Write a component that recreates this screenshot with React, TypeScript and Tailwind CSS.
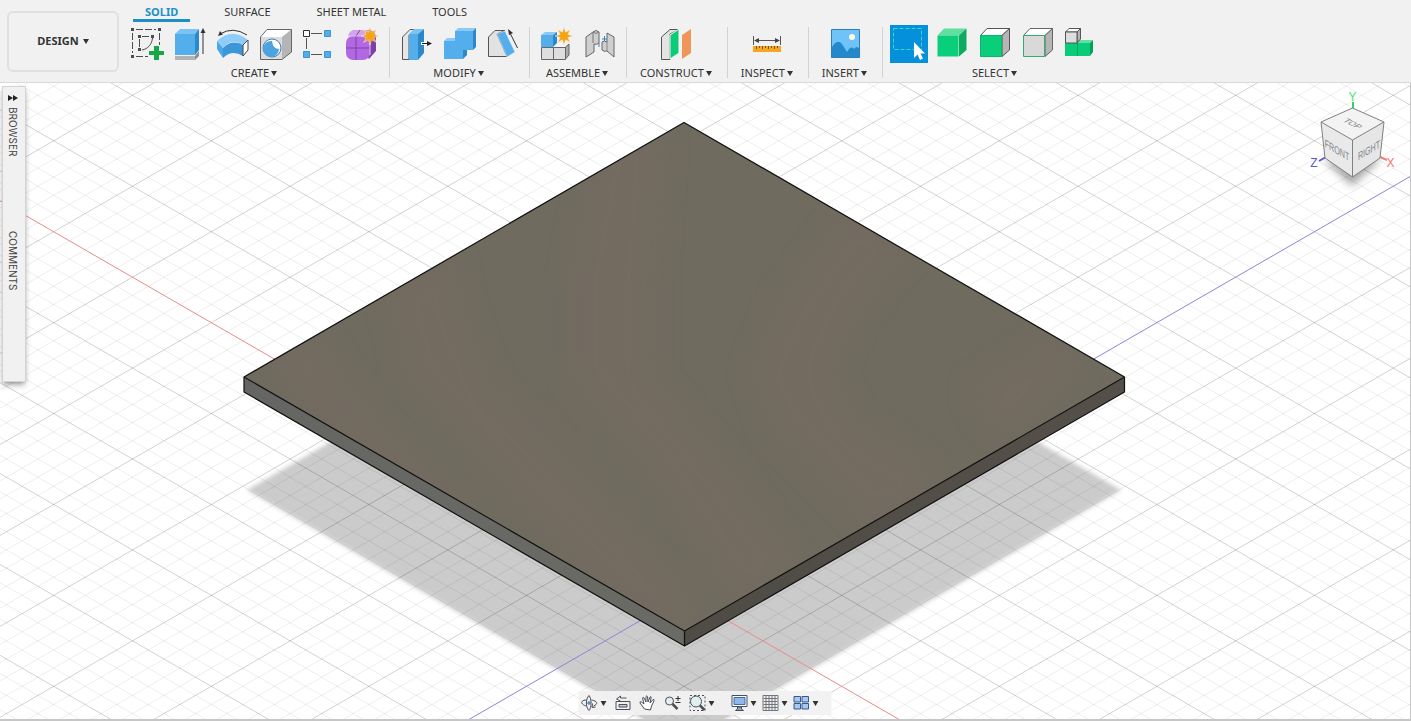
import type { ReactNode } from "react";

type Tool = { name: string; icon: ReactNode; active?: boolean };
type Group = { label: string; tools: Tool[] };

const INK = "#4d4d4d";

const Caret = () => (
  <svg viewBox="0 0 6 5" className="w-[6px] h-[5px] shrink-0" fill="#333">
    <path d="M0 0H6L3 5Z" />
  </svg>
);

const Icon = ({ children }: { children: ReactNode }) => (
  <svg viewBox="0 0 38 38" className="w-[38px] h-[38px]" fill="none" strokeLinejoin="round">
    {children}
  </svg>
);

const Star = () => (
  <path
    d="M27 2L28.600 7.200L33.400 4.600L30.800 9.400L36 11L30.800 12.600L33.400 17.400L28.600 14.800L27 20L25.400 14.800L20.600 17.400L23.200 12.600L18 11L23.200 9.400L20.600 4.600L25.400 7.200Z"
    fill="#f5a30e"
    stroke="#f0f0f0"
    strokeWidth="0.5"
  />
);

const SketchIcon = () => (
  <Icon>
    <path d="M8 4.500H28M31.500 8V20M4.500 8V28M8 31.500H20" stroke={INK} strokeDasharray="7 2" />
    <path d="M14 11.500H21M11.500 14V22M24.500 13C24 19 20 24 14 25" stroke={INK} />
    <path d="M3 3h3v3h-3zM30 3h3v3h-3zM3 30h3v3h-3zM10 10h3v3h-3zM23 10h3v3h-3zM10 23h3v3h-3z" fill={INK} />
    <path d="M26 21h5v5h5v4h-5v5h-5v-5h-5v-4h5z" fill="#17a745" />
  </Icon>
);

const ExtrudeIcon = () => (
  <Icon>
    <path d="M4 31H24V35H4Z" fill="#b3b3b3" />
    <path d="M24 31L28 26V31L24 35Z" fill="#8c8c8c" />
    <path d="M4 9L9 4H28L24 9Z" fill="#7cc3f5" />
    <path d="M4 9H24V30H4Z" fill="#55aeec" />
    <path d="M24 9L28 4V25L24 30Z" fill="#2b88cb" />
    <path d="M32 6V29" stroke="#333" />
    <path d="M32 3L34.500 8H29.500Z" fill="#333" />
  </Icon>
);

const RevolveIcon = () => (
  <Icon>
    <path d="M6 9Q19 1 33 10" stroke="#333" />
    <path d="M4 11L6 6L9 9.500Z" fill="#333" />
    <path d="M3 16Q18 2 34 15L29 20Q18 12 9 23Z" fill="#8fcdf8" />
    <path d="M3 16L9 23V33L3 24Z" fill="#4aa6e6" />
    <path d="M9 23Q18 14 29 20V31Q18 24 9 33Z" fill="#3c97d8" />
    <path d="M29 20L34 15V25L29 31Z" fill="#fff" stroke="#444" />
  </Icon>
);

const HoleIcon = () => (
  <Icon>
    <path d="M3 12L10 4H35L25 12Z" fill="#fff" />
    <path d="M3 12H25V34H3Z" fill="#dcdcdc" />
    <path d="M25 12L35 4V27L25 34Z" fill="#b5b5b5" />
    <path d="M3.500 12L10 4.500H34.500V27L25 34.500H3.500Z" stroke="#666" />
    <circle cx="15" cy="23" r="9" fill="#fff" stroke="#3a7fb3" />
    <path d="M15 16A8 8 0 1 0 22 24Q16 24 15 16Z" fill="#4ba3e0" />
  </Icon>
);

const PatternIcon = () => (
  <Icon>
    <path d="M11 8.500H22M6.500 13V24M11 29.500H22" stroke="#555" />
    <path d="M3.500 5.500h6v6h-6z" fill="#fff" stroke="#333" />
    <path d="M24.500 5.500h6v6h-6zM24.500 26.500h6v6h-6zM3.500 26.500h6v6h-6z" fill="#55aeec" stroke="#3b93d0" />
  </Icon>
);

const FormIcon = () => (
  <Icon>
    <path d="M10 5H27Q33 7 33 13V26L26 34L9 10Z" fill="#7e3fa8" />
    <path d="M11 5H24Q28 6 27 11H5Q6 6 11 5Z" fill="#d3a3ef" />
    <rect x="3" y="11" width="24" height="24" rx="7" fill="#b368e3" />
    <path d="M13 11V35M3 23H27M13 11L17 5M27 23L33 17" stroke="#7d42a6" />
    <path d="M5 11H25M27 15V30" stroke="#e0bdf3" />
    <Star />
  </Icon>
);

const PressPullIcon = () => (
  <Icon>
    <path d="M5.500 12L13 4.500H20L12 10V34.500H5.500Z" fill="#e6e6e6" stroke="#555" />
    <path d="M12 9L17 4H27L21 9Z" fill="#7cc3f5" />
    <path d="M12 9H21V35H12Z" fill="#55aeec" />
    <path d="M21 9L27 4V28L21 35Z" fill="#2b88cb" />
    <path d="M24 18.500H31" stroke="#fff" strokeWidth="3" />
    <path d="M25 18.500H31" stroke="#222" />
    <path d="M35 18.500L30 16V21Z" fill="#222" />
  </Icon>
);

const CombineIcon = () => (
  <Icon>
    <path d="M4 16L7 13H15V6L18 3H36L33 6H15V16Z" fill="#8acaf7" />
    <path d="M4 16H15V6H33V25H23V34H4Z" fill="#55aeec" />
    <path d="M33 6L36 3V22L33 25ZM23 25H27V30L23 34Z" fill="#2b88cb" />
  </Icon>
);

const ChamferIcon = () => (
  <Icon>
    <path d="M5.500 12L12 5.500H22L14 9L24 31.500H5.500Z" fill="#e2e2e2" stroke="#555" />
    <path d="M14 9L22 6L32 27L24 32Z" fill="#55aeec" stroke="#f5f5f5" strokeWidth="0.500" />
    <path d="M34.500 23L27 8" stroke="#333" />
    <path d="M25 4L30 8L26 10Z" fill="#333" />
  </Icon>
);

const ComponentIcon = () => (
  <Icon>
    <path d="M16 22L20 18H32L28 22Z" fill="#f5f5f5" />
    <path d="M4.500 22.500H16.500V34.500H4.500ZM16.500 22.500H28.500V34.500H16.500Z" fill="#dedede" stroke="#666" />
    <path d="M28.500 22L32 19V30L28.500 34Z" fill="#aaa" stroke="#666" />
    <path d="M4 10L8 7H20L16 10Z" fill="#8acaf7" />
    <path d="M4 10H16V22H4Z" fill="#55aeec" />
    <path d="M16 10L20 7V18L16 22Z" fill="#2b88cb" />
    <Star />
  </Icon>
);

const JointIcon = () => (
  <Icon>
    <path d="M6 12L13 7Q16 4 19 7V18Q17 20 14 19V27L6 32Z" fill="#cfcfcf" stroke="#666" />
    <path d="M13 7Q16 10 19 7M13 8V18" stroke="#777" />
    <path d="M34 12L27 8V17Q24 15 22 17V25Q24 27 27 26L34 32Z" fill="#cfcfcf" stroke="#666" />
    <path d="M27 17V26" stroke="#888" />
    <path d="M19 22V18M24.500 11V16M22 14H27" stroke="#2b88cb" />
  </Icon>
);

const PlaneIcon = () => (
  <Icon>
    <path d="M4.500 12L13 4.500H22L13 9V34.500H4.500Z" fill="#e4e4e4" stroke="#555" />
    <path d="M13 10L22 4V28L13 34Z" fill="#0acb78" stroke="#f5f5f5" />
    <path d="M25 10L34 4V28L25 34Z" fill="#f0955a" />
  </Icon>
);

const MeasureIcon = () => (
  <Icon>
    <path d="M5.500 11V20M32.500 11V20M8 15.500H30" stroke="#555" />
    <path d="M6 15.500L11 13V18ZM32 15.500L27 13V18Z" fill="#444" />
    <path d="M5 21H33V27H5Z" fill="#f5a623" />
    <path d="M8.500 21V24M11.500 21V23M14.500 21V24M17.500 21V23M20.500 21V24M23.500 21V23M26.500 21V24M29.500 21V23" stroke="#7a5210" />
  </Icon>
);

const ImageIcon = () => (
  <Icon>
    <path d="M5.500 4.500H33.500V32.500H5.500Z" fill="#6fc3f9" />
    <path d="M5.500 23Q11 13 16 19L21 27Q25 20 28 24Q31 20 33.500 24V32.500H5.500Z" fill="#2489ca" />
    <circle cx="26" cy="12" r="3" fill="#fffbe0" />
    <path d="M5.500 4.500H33.500V32.500H5.500Z" stroke="#2b80b8" />
  </Icon>
);

const WindowSelectIcon = () => (
  <Icon>
    <path d="M3.500 3.500H31.500V24.500H3.500Z" stroke="#3cd6c4" strokeDasharray="4 2" />
    <path d="M24 17V33L27.500 29.500L30 35L33 33.500L30.500 28.500H35Z" fill="#fff" />
  </Icon>
);

type BoxProps = { front: string; top: string; side: string; edge?: string; frontEdge?: string };
const BoxIcon = ({ front, top, side, edge, frontEdge }: BoxProps) => (
  <Icon>
    <path d="M4.500 10.500L11 3.500H33.500L26 10.500Z" fill={top} stroke={edge} />
    <path d="M26 10.500L33.500 3.500V25L26 31.500Z" fill={side} stroke={edge} />
    <path d="M4.500 10.500H25.500V31.500H4.500Z" fill={front} stroke={frontEdge} />
  </Icon>
);

const BodySelectIcon = () => (
  <Icon>
    <path d="M3 18L6 15H31L28 18Z" fill="#5fe09f" />
    <path d="M3 18H28V31H3Z" fill="#0acb78" />
    <path d="M28 18L31 15V27L28 31Z" fill="#00a35a" />
    <path d="M15.500 18V31" stroke="#00a35a" />
    <path d="M3.500 7L7 3.500H18.500L15 7Z" fill="#fff" stroke="#555" />
    <path d="M15 7L18.500 3.500V14L15 18Z" fill="#b5b5b5" stroke="#555" />
    <path d="M3.500 7H15V18H3.500Z" fill="#dedede" stroke="#555" />
  </Icon>
);

const tabs = ["SOLID", "SURFACE", "SHEET METAL", "TOOLS"];

const groups: Group[] = [
  {
    label: "CREATE",
    tools: [
      { name: "Create sketch", icon: <SketchIcon /> },
      { name: "Extrude", icon: <ExtrudeIcon /> },
      { name: "Revolve", icon: <RevolveIcon /> },
      { name: "Hole", icon: <HoleIcon /> },
      { name: "Pattern", icon: <PatternIcon /> },
      { name: "Create form", icon: <FormIcon /> },
    ],
  },
  {
    label: "MODIFY",
    tools: [
      { name: "Press pull", icon: <PressPullIcon /> },
      { name: "Combine", icon: <CombineIcon /> },
      { name: "Chamfer", icon: <ChamferIcon /> },
    ],
  },
  {
    label: "ASSEMBLE",
    tools: [
      { name: "New component", icon: <ComponentIcon /> },
      { name: "Joint", icon: <JointIcon /> },
    ],
  },
  { label: "CONSTRUCT", tools: [{ name: "Offset plane", icon: <PlaneIcon /> }] },
  { label: "INSPECT", tools: [{ name: "Measure", icon: <MeasureIcon /> }] },
  { label: "INSERT", tools: [{ name: "Canvas", icon: <ImageIcon /> }] },
  {
    label: "SELECT",
    tools: [
      { name: "Window selection", icon: <WindowSelectIcon />, active: true },
      { name: "Select body", icon: <BoxIcon front="#0acf7a" top="#5fe09f" side="#0cab5f" /> },
      { name: "Select face", icon: <BoxIcon front="#0acf7a" top="#fff" side="#b5b5b5" edge="#555" frontEdge="#0bb56b" /> },
      { name: "Select edge", icon: <BoxIcon front="#d9d9d9" top="#fff" side="#b5b5b5" edge="#666" frontEdge="#2fae74" /> },
      { name: "Select component", icon: <BodySelectIcon /> },
    ],
  },
];

const ToolGroup = ({ group, last }: { group: Group; last: boolean }) => (
  <>
    <div className="flex flex-col items-center pl-[7px] pr-2">
      <div className="flex gap-[5px]">
        {group.tools.map((tool) => (
          <button key={tool.name} aria-label={tool.name} className={tool.active ? "bg-[#0590dc]" : ""}>
            {tool.icon}
          </button>
        ))}
      </div>
      <button className="flex items-center gap-[2px] pl-[6px] pr-[7px] h-5 leading-5">
        {group.label}
        <Caret />
      </button>
    </div>
    {!last && <span className="w-px h-[51px] mt-[2px] bg-[#d2d2d2]" />}
  </>
);

const Toolbar = () => (
  <header className="flex h-[83px] shrink-0 bg-[#f1f1f1] border-b border-[#d9d9d9] text-[11px] text-[#333] overflow-hidden">
    <button className="flex items-center justify-center gap-1 w-28 h-[61px] ml-[7px] mr-[2px] mt-[11px] shrink-0 border-2 border-[#e0e0e0] rounded-md font-bold">
      DESIGN
      <Caret />
    </button>
    <div className="flex flex-col">
      <nav className="flex gap-[22px] pl-3 h-[22px]">
        {tabs.map((tab, i) => (
          <button
            key={tab}
            className={
              i === 0
                ? "px-3 pt-[5px] leading-[14px] border-b-[3px] border-[#1c8fc7] text-[#1c8fc7] font-bold"
                : "px-3 pt-[5px] leading-[14px] border-b-[3px] border-transparent"
            }
          >
            {tab}
          </button>
        ))}
      </nav>
      <div className="flex mt-[3px]">
        {groups.map((group, i) => (
          <ToolGroup key={group.label} group={group} last={i === groups.length - 1} />
        ))}
      </div>
    </div>
  </header>
);

// world origin and the size of one major grid step on the canvas
const OX = 684.1;
const OY = 595.4;
const STEP_X = 78.8;
const STEP_Y = 45.46;

const gridPath = (major: boolean) => {
  const out: string[] = [];
  const slope = STEP_Y / STEP_X;
  for (let k = -85; k <= 60; k++) {
    if ((k % 5 === 0) !== major || k === 0) continue;
    const y = OY + (k * STEP_Y * 2) / 5;
    const dy = 900 * slope;
    out.push(`M${OX - 900} ${y - dy}L${OX + 900} ${y + dy}M${OX - 900} ${y + dy}L${OX + 900} ${y - dy}`);
  }
  return out.join("");
};

const Scene = () => (
  <svg viewBox="0 83 1410 636" preserveAspectRatio="xMidYMid slice" className="absolute inset-0 w-full h-full">
    <defs>
      <filter id="soft" x="-5%" y="-5%" width="110%" height="110%">
        <feGaussianBlur stdDeviation="2" />
      </filter>
      <filter id="band" x="-20%" y="-20%" width="140%" height="140%">
        <feGaussianBlur stdDeviation="12" />
      </filter>
      <clipPath id="top">
        <path d="M684 122.500L1124.500 377L684.500 631L244 377Z" />
      </clipPath>
      <linearGradient id="left">
        <stop offset="0" stopColor="#656663" />
        <stop offset="1" stopColor="#6b6b65" />
      </linearGradient>
      <linearGradient id="right">
        <stop offset="0" stopColor="#4f4c45" />
        <stop offset="1" stopColor="#554f4a" />
      </linearGradient>
    </defs>
    <path d="M684 238L1121 490L684 743L247 490Z" fill="#cbcbcb" filter="url(#soft)" />
    <path d={gridPath(false)} stroke="#000" strokeOpacity="0.07" />
    <path d={gridPath(true)} stroke="#000" strokeOpacity="0.18" />
    <path d="M-215.900 76.200L1584 1114.600" stroke="#e88b8b" />
    <path d="M-215.900 1114.600L1584 76.200" stroke="#8a86d8" />
    <path d="M244 377L684.500 631V646L244 392Z" fill="url(#left)" />
    <path d="M684.500 631L1124.500 377V392L684.500 646Z" fill="url(#right)" />
    <path d="M684 122.500L1124.500 377L684.500 631L244 377Z" fill="#6f6b5f" />
    <g clipPath="url(#top)">
      <g fill="#736a60" filter="url(#band)">
        <path d="M317 330L350 384L385 426L480 520L420 500L330 430L280 384L270 350Z" />
        <path d="M453 250L464 310L492 384L536 426L611 506L652 548L704 620L660 640L580 570L520 506L450 426L410 384L385 290Z" />
        <path d="M666 115L655 278L655 377L690 419L745 489L803 570L740 610L660 489L605 419L570 377L570 278L595 145Z" />
        <path d="M919 240L861 310L832 373L861 426L925 461L930 500L870 530L830 489L770 426L750 373L780 300L850 205Z" />
        <path d="M1053 335L1085 365L1071 380L1025 430L988 430L968 387Z" />
      </g>
    </g>
    <path
      d="M684 122.500L1124.500 377L684.500 631L244 377ZM244 377V392L684.500 646L1124.500 392V377M684.500 631V646"
      fill="none"
      stroke="#111"
      strokeWidth="1.2"
      strokeLinejoin="round"
    />
  </svg>
);

const ViewCube = () => (
  <svg
    viewBox="1300 84 110 110"
    className="absolute right-0 top-[1px] w-[110px] h-[110px] font-['Liberation_Sans']"
    textAnchor="middle"
  >
    <defs>
      <filter id="cubeShadow" x="-30%" y="-30%" width="160%" height="160%">
        <feGaussianBlur stdDeviation="4" />
      </filter>
    </defs>
    <path d="M1325 160L1352 148L1380 160L1352 186Z" fill="#000" fillOpacity="0.35" filter="url(#cubeShadow)" />
    <path d="M1353 102V109" stroke="#2fd65c" strokeWidth="2" />
    <path d="M1326 157L1319 161" stroke="#5f57cf" strokeWidth="2" />
    <path d="M1380 157L1387 160" stroke="#f08080" strokeWidth="2" />
    <path d="M1352.500 108L1384 122L1352.500 140L1321 122Z" fill="#f3f3f3" />
    <path d="M1321 122L1352.500 140V177L1325 158Z" fill="#e9e9e9" />
    <path d="M1384 122L1352.500 140V177L1380 158Z" fill="#e6e6e6" />
    <path
      d="M1352.500 108L1384 122L1352.500 140L1321 122ZM1321 122L1325 158L1352.500 177L1380 158L1384 122M1352.500 140V177"
      fill="none"
      stroke="#808080"
      strokeLinejoin="round"
    />
    <g fill="#7d8388">
      <text transform="matrix(0.75 0.4 -0.8 0.4 1350 125)" fontSize="10">TOP</text>
      <text transform="matrix(0.65 0.38 0 1 1337 154)" fontSize="11">FRONT</text>
      <text transform="matrix(0.65 -0.38 0 1 1369 154)" fontSize="11">RIGHT</text>
    </g>
    <g fontSize="12">
      <text x="1352.500" y="101" fill="#4ee077">Y</text>
      <text x="1314" y="167" fill="#5f57d8">Z</text>
      <text x="1390.500" y="167" fill="#f37474">X</text>
    </g>
  </svg>
);

const SidePanel = () => (
  <aside className="absolute left-[2px] top-[3px] w-6 h-[296px] flex flex-col items-center pt-2 pr-[2px] bg-[#f1f1f1] border border-[#d4d4d4] shadow-md shadow-black/30 font-['Inter'] text-[10px] leading-[12px] text-[#444]">
    <svg viewBox="0 0 10 6" className="w-[10px] h-[6px]" fill="#222">
      <path d="M0 0L5 3L0 6ZM5 0L10 3L5 6Z" />
    </svg>
    <button className="mt-[6px] h-[124px] text-start [writing-mode:vertical-rl]">BROWSER</button>
    <button className="text-start [writing-mode:vertical-rl]">COMMENTS</button>
  </aside>
);

type NavProps = { name: string; menu?: boolean; children: ReactNode };
const NavButton = ({ name, menu, children }: NavProps) => (
  <button aria-label={name} className="flex items-center gap-[2px]">
    <svg viewBox="0 0 18 18" className="w-[18px] h-[18px]" fill="none" stroke="#4a5058" strokeLinejoin="round">
      {children}
    </svg>
    {menu && <Caret />}
  </button>
);

const NavBar = () => (
  <div className="absolute bottom-1 left-1/2 -translate-x-1/2 flex items-center gap-4 h-6 pl-[2px] pr-[13px] bg-[#f1f1f1]/95">
    <div className="flex gap-[7px]">
      <NavButton name="Orbit" menu>
        <path d="M8.500 1.500C5 5 5 13 8.500 16.500C11 14 11.500 5 8.500 1.500ZM6 6C2 6 0 8 2 10C3 11 5 12 6 12M11 6C17 7 18 10 13 12" />
        <path d="M12 9.500L11.500 13.500L15 13" />
        <path d="M8.500 7V11M6.500 9H10.500" stroke="#2f6f9f" />
      </NavButton>
      <NavButton name="Look at">
        <path d="M2.500 7.500H16.500V15.500H2.500ZM3 5L7 2V4H13M3 5L7 7" />
        <path d="M5.500 10.500H13.500V13H5.500Z" fill="#c9ccd0" />
      </NavButton>
      <NavButton name="Pan">
        <path
          d="M6 15L1.500 9Q1 7 3 8L5.500 10L4 4Q4.500 2.500 5.500 4L7.500 8L7.500 2.500Q8.500 1 9 2.500L9.500 8L11.500 3Q13 2 12.500 4L11.500 9L14.500 5.500Q16 5 15.500 7L13 12L12 16Z"
          fill="#fff"
        />
      </NavButton>
      <NavButton name="Zoom">
        <circle cx="6" cy="7" r="4" fill="#e3f0fa" />
        <path d="M9 10L14 15" strokeWidth="2.500" />
        <path d="M14.500 2V7M12 4.500H17M12 8.500H17" stroke="#333" />
      </NavButton>
      <NavButton name="Fit" menu>
        <path d="M1.500 1.500H16.500V16.500H1.500Z" strokeDasharray="2 2" />
        <circle cx="7.500" cy="7.500" r="5.500" fill="#dff0ee" />
        <path d="M11.500 11.500L16 16" strokeWidth="2.500" />
      </NavButton>
    </div>
    <div className="flex gap-[5px]">
      <NavButton name="Display settings" menu>
        <path d="M1.500 1.500H16.500V12.500H1.500Z" fill="#fff" />
        <path d="M3.500 3.500H14.500V10.500H3.500Z" fill="#8fb7ea" stroke="#3f6fae" />
        <path d="M7 13H11V15L13 16.500H5L7 15Z" fill="#9aa5b5" />
      </NavButton>
      <NavButton name="Grid and snaps" menu>
        <path d="M1.500 1.500H16.500V16.500H1.500ZM4.500 2V16M7.500 2V16M10.500 2V16M13.500 2V16M2 4.500H16M2 7.500H16M2 10.500H16M2 13.500H16" stroke="#70757b" />
      </NavButton>
      <NavButton name="Viewports" menu>
        <path d="M1.500 2.500H8V8H1.500ZM9.500 2.500H16V8H9.500ZM1.500 9.500H8V15H1.500ZM9.500 9.500H16V15H9.500Z" fill="#a9c8f0" stroke="#35598c" />
      </NavButton>
    </div>
  </div>
);

const App: React.FC = () => {
  return (
    <div className="flex flex-col h-screen bg-white font-['Noto_Sans',sans-serif]">
      <Toolbar />
      <main className="relative flex-1 overflow-hidden border-r border-b-2 border-[#c6c6c6]">
        <Scene />
        <SidePanel />
        <ViewCube />
        <NavBar />
      </main>
    </div>
  );
};

export default App;
